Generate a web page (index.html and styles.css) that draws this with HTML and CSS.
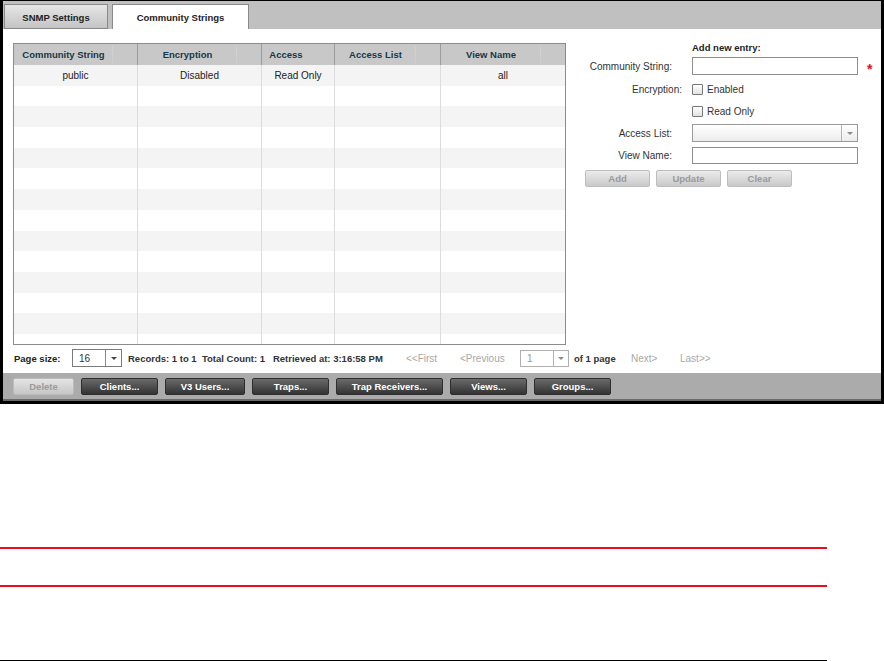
FILE: index.html
```html
<!DOCTYPE html>
<html>
<head>
<meta charset="utf-8">
<link rel="stylesheet" href="styles.css">
</head>
<body>
<div class="frame">
  <div class="tabbar">
    <div class="tab tab-inactive">SNMP Settings</div>
    <div class="tab tab-active">Community Strings</div>
  </div>
  <div class="content">
    <div class="main">
      <div class="grid-wrap">
        <div class="grid">
          <div class="hcell sort">Community String</div>
          <div class="hcell sort">Encryption</div>
          <div class="hcell nosort">Access</div>
          <div class="hcell sort">Access List</div>
          <div class="hcell sort last">View Name</div>

          <div class="cell odd">public</div><div class="cell odd">Disabled</div><div class="cell odd">Read Only</div><div class="cell odd"></div><div class="cell odd last">all</div>
          <div class="cell"></div><div class="cell"></div><div class="cell"></div><div class="cell"></div><div class="cell last"></div>
          <div class="cell odd"></div><div class="cell odd"></div><div class="cell odd"></div><div class="cell odd"></div><div class="cell odd last"></div>
          <div class="cell"></div><div class="cell"></div><div class="cell"></div><div class="cell"></div><div class="cell last"></div>
          <div class="cell odd"></div><div class="cell odd"></div><div class="cell odd"></div><div class="cell odd"></div><div class="cell odd last"></div>
          <div class="cell"></div><div class="cell"></div><div class="cell"></div><div class="cell"></div><div class="cell last"></div>
          <div class="cell odd"></div><div class="cell odd"></div><div class="cell odd"></div><div class="cell odd"></div><div class="cell odd last"></div>
          <div class="cell"></div><div class="cell"></div><div class="cell"></div><div class="cell"></div><div class="cell last"></div>
          <div class="cell odd"></div><div class="cell odd"></div><div class="cell odd"></div><div class="cell odd"></div><div class="cell odd last"></div>
          <div class="cell"></div><div class="cell"></div><div class="cell"></div><div class="cell"></div><div class="cell last"></div>
          <div class="cell odd"></div><div class="cell odd"></div><div class="cell odd"></div><div class="cell odd"></div><div class="cell odd last"></div>
          <div class="cell"></div><div class="cell"></div><div class="cell"></div><div class="cell"></div><div class="cell last"></div>
          <div class="cell odd"></div><div class="cell odd"></div><div class="cell odd"></div><div class="cell odd"></div><div class="cell odd last"></div>
          <div class="cell"></div><div class="cell"></div><div class="cell"></div><div class="cell"></div><div class="cell last"></div>
          <div class="cell odd"></div><div class="cell odd"></div><div class="cell odd"></div><div class="cell odd"></div><div class="cell odd last"></div>
          <div class="cell"></div><div class="cell"></div><div class="cell"></div><div class="cell"></div><div class="cell last"></div>
        </div>
      </div>

      <div class="form">
        <div class="frow r-title"><span class="flabel"></span><span class="title-text">Add new entry:</span></div>
        <div class="frow r-cs"><span class="flabel">Community String:</span><span class="input"></span><span class="req">*</span></div>
        <div class="frow r-enc"><span class="flabel enc">Encryption:</span><span class="check"></span><span class="ctext">Enabled</span></div>
        <div class="frow r-ro"><span class="flabel"></span><span class="check"></span><span class="ctext">Read Only</span></div>
        <div class="frow r-al"><span class="flabel">Access List:</span><span class="select wide"><span class="sel-val"></span><span class="sel-btn"><span class="arrow"></span></span></span></div>
        <div class="frow r-vn"><span class="flabel">View Name:</span><span class="input short"></span></div>
        <div class="fbtns">
          <span class="lbtn">Add</span><span class="lbtn">Update</span><span class="lbtn">Clear</span>
        </div>
      </div>
    </div>

    <div class="pager">
      <span class="p-label">Page size:</span>
      <span class="select small"><span class="sel-val">16</span><span class="sel-btn"><span class="arrow dark"></span></span></span>
      <span class="p-records">Records: 1 to 1&nbsp; Total Count: 1&nbsp;&nbsp; Retrieved at: 3:16:58 PM</span>
      <span class="p-link w-first">&lt;&lt;First</span>
      <span class="p-link w-prev">&lt;Previous</span>
      <span class="select small2 disabled"><span class="sel-val">1</span><span class="sel-btn"><span class="arrow"></span></span></span>
      <span class="p-of">of 1 page</span>
      <span class="p-link w-next">Next&gt;</span>
      <span class="p-link">Last&gt;&gt;</span>
    </div>
  </div>
  <div class="toolbar">
    <span class="tbtn off w61">Delete</span>
    <span class="tbtn w77">Clients...</span>
    <span class="tbtn w80">V3 Users...</span>
    <span class="tbtn w77">Traps...</span>
    <span class="tbtn w107">Trap Receivers...</span>
    <span class="tbtn w77">Views...</span>
    <span class="tbtn w77">Groups...</span>
  </div>
</div>

<div class="rule red r1"></div>
<div class="rule red r2"></div>
<div class="rule black r3"></div>
</body>
</html>
```

FILE: styles.css
```css
body {
  margin: 0;
  width: 884px;
  background: #fff;
  font-family: "Liberation Sans", Arial, sans-serif;
  font-size: 10px;
  color: #222;
}

.frame {
  width: 884px;
  height: 404px;
  box-sizing: border-box;
  border-style: solid;
  border-color: #000;
  border-width: 1px 3px 3px 3px;
  display: flex;
  flex-direction: column;
}

/* tabs */
.tabbar {
  flex: none;
  height: 28px;
  background: #c0c0c0;
  display: flex;
  align-items: flex-end;
  gap: 4px;
  padding-left: 1px;
}
.tab {
  height: 25px;
  box-sizing: border-box;
  border: 1px solid #8a8a8a;
  display: flex;
  align-items: center;
  justify-content: center;
  padding-top: 1px;
  font-weight: bold;
  font-size: 9.5px;
  color: #222;
}
.tab-inactive {
  width: 104px;
  background: linear-gradient(#e6e6e6, #c4c4c4);
}
.tab-active {
  width: 137px;
  background: #fff;
  border-bottom: none;
}

/* content */
.content {
  flex: 1;
  background: #fff;
  display: flex;
  flex-direction: column;
  padding: 14px 0 0 10px;
}
.main {
  display: flex;
  align-items: flex-start;
}

.grid-wrap {
  flex: none;
  width: 553px;
  height: 302px;
  box-sizing: border-box;
  border: 1px solid #8c8c8c;
  overflow: hidden;
}
.grid {
  display: grid;
  grid-template-columns: 124px 124px 73px 106px 124px;
  grid-auto-rows: 20.7px;
  grid-template-rows: 21px;
}
.hcell {
  position: relative;
  box-sizing: border-box;
  background: #c8c8c8;
  border-right: 1px solid #9c9c9c;
  font-weight: bold;
  font-size: 9.5px;
  color: #173846;
  display: flex;
  align-items: center;
  justify-content: center;
  padding-right: 24px;
}
.hcell.sort::after {
  content: "";
  position: absolute;
  right: 24px;
  top: 2px;
  bottom: 2px;
  width: 1px;
  background: #d0d0d0;
}
.hcell.last {
  border-right: none;
}
.cell {
  box-sizing: border-box;
  background: #fff;
  border-right: 1px solid #dcdcdc;
  display: flex;
  align-items: center;
  justify-content: center;
  color: #222;
}
.cell.odd {
  background: #f4f4f4;
}
.cell.last {
  border-right: none;
}

/* form */
.form {
  margin-left: 19px;
  margin-top: -2px;
  display: flex;
  flex-direction: column;
}
.frow {
  display: flex;
  align-items: center;
}
.flabel {
  flex: none;
  width: 87px;
  margin-right: 20px;
  text-align: right;
  color: #333;
}
.flabel.enc {
  width: 97px;
  margin-right: 10px;
}
.r-title { height: 12px; }
.title-text { font-weight: bold; font-size: 9.5px; color: #222; }
.r-cs { height: 18px; margin-top: 4px; }
.r-enc { height: 12px; margin-top: 8px; }
.r-ro { height: 12px; margin-top: 10px; }
.r-al { height: 18px; margin-top: 7px; }
.r-vn { height: 17px; margin-top: 5px; }

.input {
  flex: none;
  width: 166px;
  height: 18px;
  box-sizing: border-box;
  border: 1px solid #8e8e8e;
  background: #fff;
}
.input.short {
  height: 17px;
}
.req {
  margin-left: 9px;
  color: #e0101e;
  font-weight: bold;
  font-size: 14px;
  line-height: 10px;
  height: 8px;
  padding-top: 4px;
}
.check {
  flex: none;
  width: 11px;
  height: 11px;
  box-sizing: border-box;
  border: 1px solid #777;
  border-radius: 1px;
  background: linear-gradient(#fff, #e2e2e2);
}
.ctext {
  margin-left: 4px;
  color: #333;
}

.select {
  flex: none;
  display: flex;
  box-sizing: border-box;
  border: 1px solid #9a9a9a;
  background: linear-gradient(#fff, #ececec);
}
.select.wide {
  width: 166px;
  height: 18px;
}
.sel-val {
  flex: 1;
  display: flex;
  align-items: center;
  padding-left: 6px;
  color: #333;
}
.sel-btn {
  flex: none;
  width: 15px;
  border-left: 1px solid #b4b4b4;
  display: flex;
  align-items: center;
  justify-content: center;
}
.arrow {
  width: 0;
  height: 0;
  border-left: 3px solid transparent;
  border-right: 3px solid transparent;
  border-top: 3px solid #8a8a8a;
}
.arrow.dark {
  border-top-color: #444;
}

.fbtns {
  margin-top: 6px;
  display: flex;
  gap: 6px;
}
.lbtn {
  width: 65px;
  height: 17px;
  box-sizing: border-box;
  border: 1px solid #bdbdbd;
  border-radius: 2px;
  background: linear-gradient(#ebebeb, #c9c9c9);
  color: #9a9a9a;
  font-weight: bold;
  font-size: 9.5px;
  display: flex;
  align-items: center;
  justify-content: center;
}

/* pager */
.pager {
  display: flex;
  align-items: center;
  height: 18px;
  margin-top: 4px;
  padding-left: 1px;
  white-space: nowrap;
}
.p-label {
  width: 58px;
  font-weight: bold;
  font-size: 9.5px;
  color: #222;
}
.select.small {
  width: 50px;
  height: 18px;
  border-color: #7a7a7a;
  background: #fff;
}
.select.small .sel-btn { width: 15px; border-left-color: #8a8a8a; }
.select.small2 {
  width: 49px;
  height: 17px;
  background: #fff;
  border-color: #b0b0b0;
}
.select.small2 .sel-btn { width: 14px; }
.select.disabled .sel-val { color: #999; }
.p-records {
  margin-left: 6px;
  width: 278px;
  font-weight: bold;
  font-size: 9.5px;
  color: #333;
}
.p-link {
  color: #a8a8a8;
}
.w-first { width: 54px; }
.w-prev { width: 60px; }
.w-next { width: 49px; }
.p-of {
  margin-left: 5px;
  width: 57px;
  font-weight: bold;
  font-size: 9.5px;
  color: #333;
}

/* toolbar */
.toolbar {
  flex: none;
  height: 26px;
  background: #ababab;
  border-bottom: 2px solid #6a6a6a;
  display: flex;
  align-items: center;
  gap: 7px;
  padding-left: 10px;
}
.tbtn {
  height: 17px;
  box-sizing: border-box;
  border: 1px solid #2e2e2e;
  border-radius: 2px;
  background: linear-gradient(#6a6a6a, #333);
  color: #fff;
  font-weight: bold;
  font-size: 9.5px;
  display: flex;
  align-items: center;
  justify-content: center;
}
.tbtn.off {
  border-color: #bcbcbc;
  background: linear-gradient(#e4e4e4, #c6c6c6);
  color: #9c9c9c;
}
.w61 { width: 61px; }
.w77 { width: 77px; }
.w80 { width: 80px; }
.w107 { width: 107px; }

/* rules below */
.rule {
  width: 827px;
}
.rule.red {
  height: 2px;
  background: #ee0a1e;
}
.rule.black {
  height: 1px;
  background: #000;
}
.r1 { margin-top: 143px; }
.r2 { margin-top: 36px; }
.r3 { margin-top: 73px; }
```
